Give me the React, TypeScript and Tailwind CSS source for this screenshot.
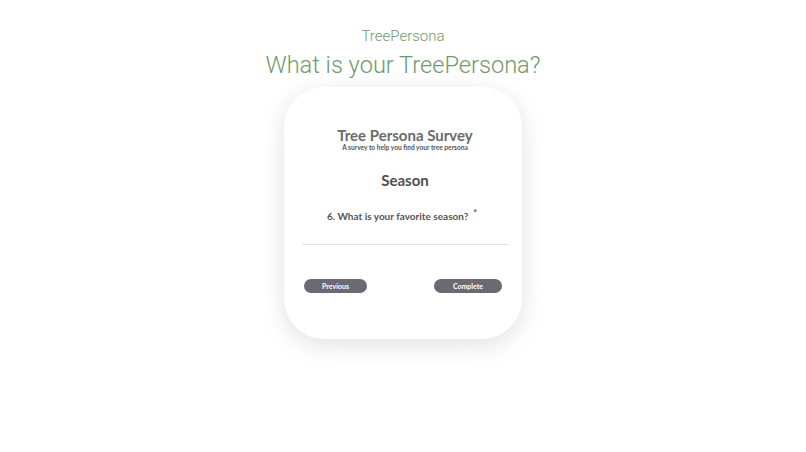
export default function App() {
  return (
    <div className="min-h-screen bg-white flex flex-col items-center pt-[26px]">
      <div className="text-[15px] leading-[20px] font-light text-[#6f9a6c]" style={{ fontFamily: 'Roboto, sans-serif' }}>
        TreePersona
      </div>
      <h1 className="mt-[4px] text-[23.6px] leading-[30px] font-light text-[#6f9a6c]" style={{ fontFamily: 'Roboto, sans-serif' }}>
        What is your TreePersona?
      </h1>
      <div
        className="mt-[7px] w-[238px] h-[252px] bg-white rounded-[40px] shadow-[0_6px_24px_rgba(0,0,0,0.12)] flex flex-col items-center pl-[18px] pr-[14px] pt-[39px]"
        style={{ fontFamily: 'Lato, sans-serif' }}
      >
        <div className="text-[15px] leading-[18px] font-bold text-[#6b6b6b]">Tree Persona Survey</div>
        <div className="text-[6.6px] leading-[7px] font-bold text-[#555]">A survey to help you find your tree persona</div>
        <div className="mt-[20px] text-[15px] leading-[18px] font-bold text-[#4f4f4f]">Season</div>
        <div className="mt-[20px] mr-[6px] flex items-start text-[10px] leading-[14px] font-bold text-[#555]">
          <span>6. What is your favorite season?</span>
          <span className="ml-[5px] text-[9px] leading-[8px]">*</span>
        </div>
        <div className="mt-[21px] w-full border-t border-[#e4e4e4]" />
        <div className="mt-[34px] w-full flex justify-between px-[2px]">
          <button className="w-[63px] h-[14px] rounded-full bg-[#6b6a72] text-white text-[7px] font-bold">Previous</button>
          <button className="w-[68px] h-[14px] mr-[4px] rounded-full bg-[#6b6a72] text-white text-[7px] font-bold">Complete</button>
        </div>
      </div>
    </div>
  )
}
